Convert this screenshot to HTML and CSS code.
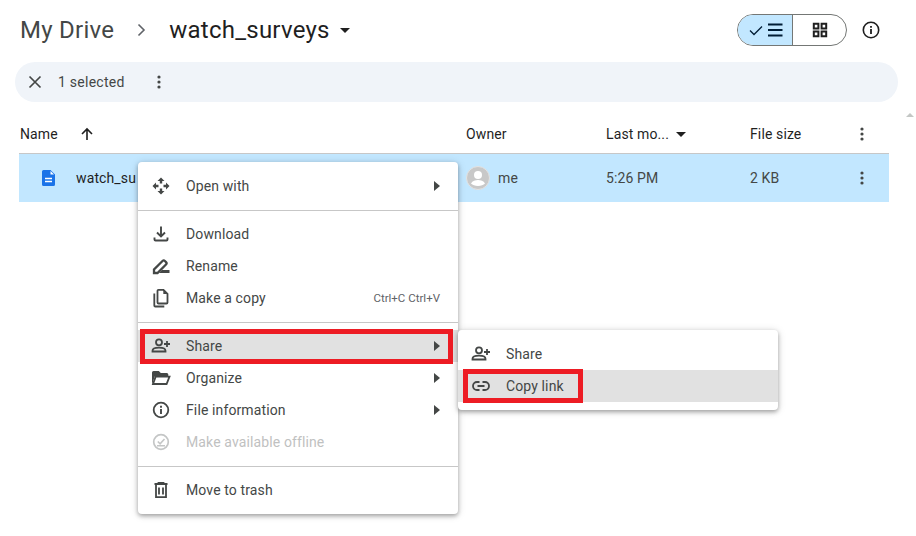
FILE: index.html
```html
<!DOCTYPE html>
<html lang="en">
<head>
    <meta charset="UTF-8">
    <title>My Drive - watch_surveys</title>
    <link rel="stylesheet" href="styles.css">
</head>
<body>
    <div class="page">
        <div class="topbar">
            <span class="crumb">My Drive</span>
            <svg class="crumb-sep" width="24" height="24" viewBox="0 0 24 24"><path d="M9.500 6.500 15 12l-5.500 5.500" fill="none" stroke="#5f6368" stroke-width="1.600"/></svg>
            <span class="crumb current">watch_surveys</span>
            <svg class="crumb-caret" width="10" height="5" viewBox="0 0 10 5"><path d="M0 0h10L5 5z" fill="#1f1f1f"/></svg>
            <div class="view-toggle">
                <div class="toggle-btn active">
                    <svg width="18" height="18" viewBox="0 0 18 18"><path d="M3 9.500 7 13.500 15 5.500" fill="none" stroke="#001d35" stroke-width="1.300"/></svg>
                    <svg width="18" height="18" viewBox="0 0 18 18"><path d="M2 3.500h14.500M2 9h14.500M2 14.500h14.500" stroke="#001d35" stroke-width="1.800"/></svg>
                </div>
                <div class="toggle-btn">
                    <svg width="18" height="18" viewBox="0 0 18 18"><path d="M2.800 2.800h4.600v4.600H2.800zM10.600 2.800h4.600v4.600h-4.600zM2.800 10.600h4.600v4.600H2.800zM10.600 10.600h4.600v4.600h-4.600z" fill="none" stroke="#1f1f1f" stroke-width="2"/></svg>
                </div>
            </div>
            <svg class="info-btn" width="20" height="20" viewBox="0 0 20 20"><circle cx="10" cy="10" r="7.700" fill="none" stroke="#1f1f1f" stroke-width="1.600"/><path d="M10 9v5M10 6v1.700" stroke="#1f1f1f" stroke-width="1.800"/></svg>
        </div>

        <div class="selbar">
            <svg width="14" height="14" viewBox="0 0 14 14"><path d="M1.500 1.500l11 11M12.500 1.500l-11 11" stroke="#444746" stroke-width="1.700"/></svg>
            <span class="sel-count">1 selected</span>
            <svg class="dots" width="4" height="14" viewBox="0 0 4 14"><circle cx="2" cy="2" r="1.600"/><circle cx="2" cy="7" r="1.600"/><circle cx="2" cy="12" r="1.600"/></svg>
        </div>

        <div class="table">
            <div class="row head">
                <div class="col-name">Name
                    <svg width="14" height="14" viewBox="0 0 14 14"><path d="M7 13V2M2 7l5-5 5 5" fill="none" stroke="#1f1f1f" stroke-width="1.600"/></svg>
                </div>
                <div class="col-owner">Owner</div>
                <div class="col-date">Last mo...
                    <svg width="10" height="5" viewBox="0 0 10 5"><path d="M0 0h10L5 5z" fill="#1f1f1f"/></svg>
                </div>
                <div class="col-size">File size</div>
                <svg class="dots" width="4" height="14" viewBox="0 0 4 14"><circle cx="2" cy="2" r="1.600"/><circle cx="2" cy="7" r="1.600"/><circle cx="2" cy="12" r="1.600"/></svg>
            </div>
            <div class="row file">
                <div class="col-name">
                    <svg class="doc-icon" width="13" height="16" viewBox="0 0 13 16"><path d="M1.500 0h7L13 4.500V14.500a1.500 1.500 0 0 1-1.500 1.500h-10A1.500 1.500 0 0 1 0 14.500v-13A1.500 1.500 0 0 1 1.500 0z" fill="#1a73e8"/><path d="M8.500 1v3.500H12z" fill="#fff"/><path d="M3 8.500h7M3 11.500h7" stroke="#fff" stroke-width="1.300"/></svg>
                    watch_su
                </div>
                <div class="col-owner">
                    <svg class="avatar" width="24" height="24" viewBox="0 0 24 24"><circle cx="12" cy="12" r="11.500" fill="#c8c8c8" stroke="#e3e3e3"/><circle cx="12" cy="9" r="4" fill="#fff"/><path d="M5 17.500c1.500-2.600 4.300-3.500 7-3.500s5.500.9 7 3.500c-1.500 1.500-4 2.500-7 2.500s-5.500-1-7-2.500z" fill="#fff"/></svg>
                    me
                </div>
                <div class="col-date">5:26 PM</div>
                <div class="col-size">2 KB</div>
                <svg class="dots" width="4" height="14" viewBox="0 0 4 14"><circle cx="2" cy="2" r="1.600"/><circle cx="2" cy="7" r="1.600"/><circle cx="2" cy="12" r="1.600"/></svg>
            </div>
        </div>
    </div>

    <svg class="scroll-up" width="8" height="4" viewBox="0 0 8 4"><path d="M0 4h8L4 0z" fill="#c4c7c5"/></svg>

    <div class="menu main-menu">
        <div class="item">
            <svg class="ico" width="20" height="20" viewBox="0 0 20 20"><path d="M10 1.500 6.500 5h2.300v2.500h2.400V5h2.300zM10 18.500 6.500 15h2.300v-2.500h2.400V15h2.300zM1.500 10 5 6.500v2.300h2.500v2.400H5v2.300zM18.500 10 15 6.500v2.300h-2.500v2.400H15v2.300z" fill="#444746"/></svg>
            <span class="label">Open with</span>
            <span class="arrow"></span>
        </div>
        <div class="divider"></div>
        <div class="item">
            <svg class="ico" width="20" height="20" viewBox="0 0 20 20"><path d="M10 2.500v9.500M6 8.500l4 4 4-4" fill="none" stroke="#444746" stroke-width="1.900"/><path d="M3.500 13.500v2a1 1 0 0 0 1 1h11a1 1 0 0 0 1-1v-2" fill="none" stroke="#444746" stroke-width="1.900"/></svg>
            <span class="label">Download</span>
        </div>
        <div class="item">
            <svg class="ico" width="20" height="20" viewBox="0 0 20 20"><path d="M3 17v-3.500L11.500 5a1.700 1.700 0 0 1 2.400 0l1.100 1.100a1.700 1.700 0 0 1 0 2.400L6.500 17z" fill="none" stroke="#444746" stroke-width="2.300"/><path d="M11 14h7.500v3H8z" fill="#444746"/></svg>
            <span class="label">Rename</span>
        </div>
        <div class="item">
            <svg class="ico" width="20" height="20" viewBox="0 0 20 20"><path d="M7.500 1.800h5l4 4v8.700a1 1 0 0 1-1 1h-8a1 1 0 0 1-1-1V2.800a1 1 0 0 1 1-1z" fill="none" stroke="#444746" stroke-width="1.800"/><path d="M12.300 1.800v4.200h4.200z" fill="#444746"/><path d="M3.300 5.500v12a1 1 0 0 0 1 1h9" fill="none" stroke="#444746" stroke-width="1.800"/></svg>
            <span class="label">Make a copy</span>
            <span class="shortcut">Ctrl+C Ctrl+V</span>
        </div>
        <div class="divider"></div>
        <div class="item hover">
            <svg class="ico" width="20" height="20" viewBox="0 0 20 20"><circle cx="8" cy="6.300" r="3" fill="none" stroke="#444746" stroke-width="1.800"/><path d="M1.500 15.500v-.800c0-2 3-3 6.500-3s6.500 1 6.500 3v.800z" fill="none" stroke="#444746" stroke-width="1.800"/><path d="M16 5v6M13 8h6" stroke="#444746" stroke-width="1.800"/></svg>
            <span class="label">Share</span>
            <span class="arrow"></span>
        </div>
        <div class="item">
            <svg class="ico" width="20" height="20" viewBox="0 0 20 20"><path d="M1 16.500V4.500a1.500 1.500 0 0 1 1.500-1.500h5.300l2 2h6a1.500 1.500 0 0 1 1.500 1.500V8H4z" fill="#444746"/><path d="M2 16h13.600l2.900-7.300H4.700z" fill="#fff" stroke="#444746" stroke-width="1.800"/></svg>
            <span class="label">Organize</span>
            <span class="arrow"></span>
        </div>
        <div class="item">
            <svg class="ico" width="20" height="20" viewBox="0 0 20 20"><circle cx="10" cy="10" r="7.300" fill="none" stroke="#444746" stroke-width="1.800"/><path d="M10 9v5M10 5.800v1.900" stroke="#444746" stroke-width="1.900"/></svg>
            <span class="label">File information</span>
            <span class="arrow"></span>
        </div>
        <div class="item disabled">
            <svg class="ico" width="20" height="20" viewBox="0 0 20 20"><circle cx="10" cy="10" r="7.300" fill="none" stroke="#c4c6c6" stroke-width="1.700"/><path d="M6.800 9.500l2.300 2.300 4.400-4.800M6 13.800h8" fill="none" stroke="#c4c6c6" stroke-width="1.600"/></svg>
            <span class="label">Make available offline</span>
        </div>
        <div class="divider"></div>
        <div class="item">
            <svg class="ico" width="20" height="20" viewBox="0 0 20 20"><path d="M3.500 4h13M7.500 4V2.800h5V4" fill="none" stroke="#444746" stroke-width="1.800"/><path d="M5 4.500v12.700h10V4.500" fill="none" stroke="#444746" stroke-width="1.800"/><path d="M8 7.500v7M12 7.500v7" stroke="#444746" stroke-width="1.800"/></svg>
            <span class="label">Move to trash</span>
        </div>
    </div>

    <div class="menu sub-menu">
        <div class="item">
            <svg class="ico" width="20" height="20" viewBox="0 0 20 20"><circle cx="8" cy="6.300" r="3" fill="none" stroke="#444746" stroke-width="1.800"/><path d="M1.500 15.500v-.800c0-2 3-3 6.500-3s6.500 1 6.500 3v.800z" fill="none" stroke="#444746" stroke-width="1.800"/><path d="M16 5v6M13 8h6" stroke="#444746" stroke-width="1.800"/></svg>
            <span class="label">Share</span>
        </div>
        <div class="item hover">
            <svg class="ico" width="20" height="20" viewBox="0 0 20 20"><path d="M8.500 6H6a4 4 0 0 0 0 8h2.500M11.500 6H14a4 4 0 0 1 0 8h-2.500M6.500 10h7" fill="none" stroke="#444746" stroke-width="1.800"/></svg>
            <span class="label">Copy link</span>
        </div>
    </div>

    <div class="callout callout-share"></div>
    <div class="callout callout-link"></div>
</body>
</html>
```

FILE: styles.css
```css
* {
    box-sizing: border-box;
}
html, body {
    margin: 0;
    height: 536px;
    overflow: hidden;
    background: #fff;
}
body {
    position: relative;
    font-family: Roboto, "Liberation Sans", sans-serif;
    font-size: 14px;
    letter-spacing: .12px;
    color: #1f1f1f;
}
.page {
    padding: 14px 27px 0 15px;
    width: 916px;
}
svg {
    display: block;
    flex: none;
}

/* top row */
.topbar {
    display: flex;
    align-items: center;
    height: 32px;
    padding-left: 5px;
}
.crumb {
    font-size: 24px;
    letter-spacing: .25px;
    color: #444746;
    line-height: 32px;
}
.crumb.current {
    color: #1f1f1f;
}
.crumb-sep {
    margin: 0 16px 0 15px;
}
.crumb-caret {
    margin-left: 10px;
}
.view-toggle {
    display: flex;
    margin-left: auto;
    height: 32px;
    width: 110px;
    border: 1px solid #747775;
    border-radius: 16px;
    overflow: hidden;
}
.toggle-btn {
    flex: 1;
    display: flex;
    align-items: center;
    justify-content: center;
}
.toggle-btn.active {
    flex: none;
    width: 55px;
    gap: 1px;
    background: #c2e7ff;
    border-right: 1px solid #747775;
}
.info-btn {
    margin: 0 8px 0 14px;
}

/* selection bar */
.selbar {
    display: flex;
    align-items: center;
    height: 40px;
    margin-top: 16px;
    padding-left: 13px;
    width: 883px;
    border-radius: 20px;
    background: #f0f4f9;
}
.sel-count {
    margin-left: 16px;
    letter-spacing: .25px;
    color: #444746;
}
.selbar .dots {
    margin-left: 32px;
}
.dots {
    fill: #444746;
}

/* file list */
.table {
    margin: 13px 0 0 4px;
    width: 870px;
}
.row {
    display: flex;
    align-items: center;
}
.head {
    height: 39px;
    border-bottom: 1px solid #c7c7c7;
}
.file {
    height: 48px;
    background: #c2e7ff;
}
.col-name {
    display: flex;
    align-items: center;
    width: 447px;
    padding-left: 1px;
}
.head .col-name svg {
    margin-left: 22px;
}
.doc-icon {
    margin: 0 21px 0 22px;
}
.col-owner {
    display: flex;
    align-items: center;
    gap: 8px;
    width: 140px;
}
.col-date {
    display: flex;
    align-items: center;
    gap: 7px;
    width: 144px;
}
.col-size {
    width: 110px;
}
.file .col-size, .file .col-date, .file .col-owner {
    color: #444746;
}
.scroll-up {
    position: absolute;
    left: 906px;
    top: 113px;
}

/* context menus */
.menu {
    position: absolute;
    width: 320px;
    padding: 8px 0;
    background: #fff;
    border-radius: 4px;
    box-shadow: 0 2px 4px rgba(0, 0, 0, .3), 0 1px 8px rgba(0, 0, 0, .15);
}
.main-menu {
    left: 138px;
    top: 162px;
}
.sub-menu {
    left: 458px;
    top: 330px;
}
.item {
    display: flex;
    align-items: center;
    height: 32px;
    padding: 0 18px 0 13px;
    color: #444746;
}
.item.hover {
    background: #e1e1e1;
}
.item.disabled {
    color: #bfc1c1;
}
.ico {
    margin-right: 15px;
}
.arrow {
    margin-left: auto;
    width: 0;
    height: 0;
    border-left: 6px solid #444746;
    border-top: 5px solid transparent;
    border-bottom: 5px solid transparent;
}
.shortcut {
    margin-left: auto;
    font-size: 11.5px;
    letter-spacing: 0;
    color: #5f6368;
}
.divider {
    height: 1px;
    margin: 8px 0 7px;
    background: #c7c7c7;
}

/* red annotation boxes */
.callout {
    position: absolute;
    border: 5px solid #ed1c24;
}
.callout-share {
    left: 140px;
    top: 329px;
    width: 313px;
    height: 35px;
}
.callout-link {
    left: 463px;
    top: 369px;
    width: 120px;
    height: 34px;
}
```
